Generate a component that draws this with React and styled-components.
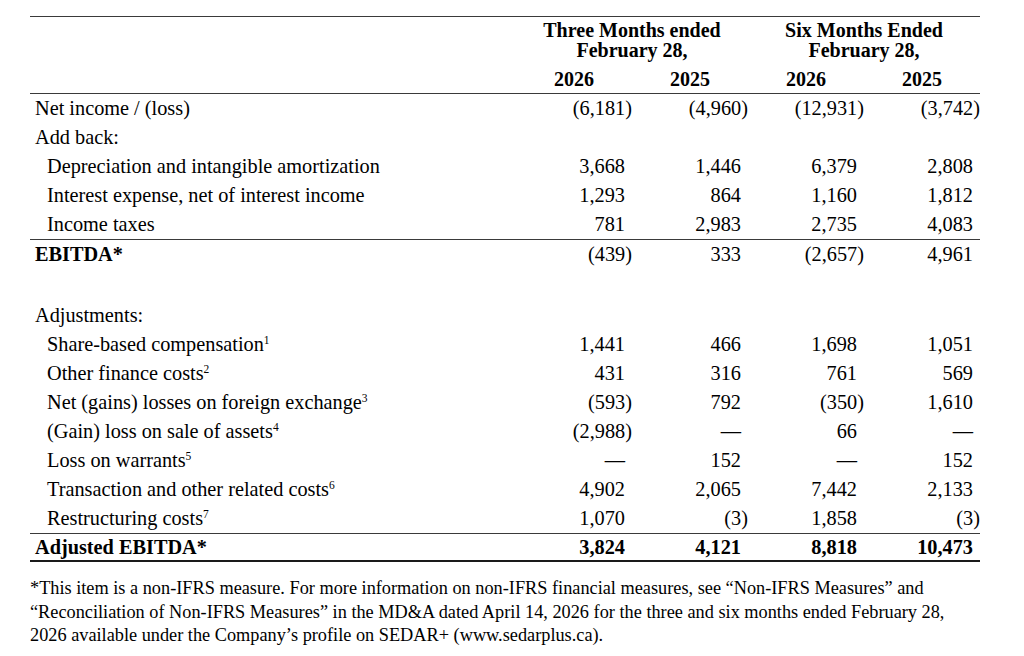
import React from 'react'
import styled, { createGlobalStyle } from 'styled-components'

const GlobalStyle = createGlobalStyle`
  html, body {
    margin: 0;
    padding: 0;
    background: #fff;
  }
  body {
    font-family: "Liberation Serif", "Times New Roman", serif;
    color: #000;
  }
`

const rows = [
  { label: 'Net income / (loss)', values: ['(6,181)', '(4,960)', '(12,931)', '(3,742)'] },
  { label: 'Add back:' },
  { label: 'Depreciation and intangible amortization', indent: true, values: ['3,668', '1,446', '6,379', '2,808'] },
  { label: 'Interest expense, net of interest income', indent: true, values: ['1,293', '864', '1,160', '1,812'] },
  { label: 'Income taxes', indent: true, values: ['781', '2,983', '2,735', '4,083'] },
  { label: 'EBITDA*', bold: true, rule: true, values: ['(439)', '333', '(2,657)', '4,961'] },
  { spacer: true },
  { label: 'Adjustments:' },
  { label: 'Share-based compensation', note: '1', indent: true, values: ['1,441', '466', '1,698', '1,051'] },
  { label: 'Other finance costs', note: '2', indent: true, values: ['431', '316', '761', '569'] },
  { label: 'Net (gains) losses on foreign exchange', note: '3', indent: true, values: ['(593)', '792', '(350)', '1,610'] },
  { label: '(Gain) loss on sale of assets', note: '4', indent: true, values: ['(2,988)', '—', '66', '—'] },
  { label: 'Loss on warrants', note: '5', indent: true, values: ['—', '152', '—', '152'] },
  { label: 'Transaction and other related costs', note: '6', indent: true, values: ['4,902', '2,065', '7,442', '2,133'] },
  { label: 'Restructuring costs', note: '7', indent: true, values: ['1,070', '(3)', '1,858', '(3)'] },
]

const App = () => {
  return (
    <Page>
      <GlobalStyle />
      <Table>
        <Header>
          <Blank />
          <GroupTitle>Three Months ended<br />February 28,</GroupTitle>
          <GroupTitle>Six Months Ended<br />February 28,</GroupTitle>
          <Blank />
          <Year>2026</Year>
          <Year>2025</Year>
          <Year>2026</Year>
          <Year>2025</Year>
        </Header>

        {rows.map((row, i) =>
          row.spacer ? (
            <Spacer key={i} />
          ) : (
            <Row key={i} $rule={row.rule}>
              <Label $indent={row.indent} $bold={row.bold}>
                {row.label}
                {row.note && <Sup>{row.note}</Sup>}
              </Label>
              {(row.values || ['', '', '', '']).map((v, j) => (
                <Num key={j} $paren={v.endsWith(')')}>{v}</Num>
              ))}
            </Row>
          )
        )}

        <TotalRow>
          <Label $bold>Adjusted EBITDA*</Label>
          <Num $bold>3,824</Num>
          <Num $bold>4,121</Num>
          <Num $bold>8,818</Num>
          <Num $bold>10,473</Num>
        </TotalRow>
      </Table>

      <Footnote>
        *This item is a non-IFRS measure. For more information on non-IFRS financial measures, see “Non-IFRS Measures” and<br />
        “Reconciliation of Non-IFRS Measures” in the MD&amp;A dated April 14, 2026 for the three and six months ended February 28,<br />
        2026 available under the Company’s profile on SEDAR+ (www.sedarplus.ca).
      </Footnote>
    </Page>
  )
}

const Page = styled.div`
  width: 1024px;
  height: 656px;
  box-sizing: border-box;
  padding: 16px 0 0 30px;
  overflow: hidden;
`

const Table = styled.div`
  width: 950px;
  font-size: 20.3px;
`

const columns = `486px repeat(4, 116px)`

const Header = styled.div`
  display: grid;
  grid-template-columns: ${columns};
  border-top: 1px solid #3a3a3a;
  border-bottom: 1px solid #3a3a3a;
  padding: 3px 0 4px;
  font-weight: bold;
  font-size: 20px;
  line-height: 20px;
`

const Blank = styled.div``

const GroupTitle = styled.div`
  grid-column: span 2;
  text-align: center;
  padding-bottom: 9px;
`

const Year = styled.div`
  text-align: center;
`

const Row = styled.div`
  display: grid;
  grid-template-columns: ${columns};
  height: 29px;
  align-items: center;
  line-height: 29px;
  border-top: ${({ $rule }) => ($rule ? '1px solid #3a3a3a' : 'none')};
`

const Spacer = styled.div`
  height: 32px;
`

const TotalRow = styled(Row)`
  height: 26px;
  line-height: 26px;
  border-top: 1px solid #3a3a3a;
  border-bottom: 2px solid #1a1a1a;
`

const Label = styled.div`
  padding-left: ${({ $indent }) => ($indent ? '17px' : '5px')};
  font-weight: ${({ $bold }) => ($bold ? 'bold' : 'normal')};
  white-space: nowrap;
`

const Sup = styled.span`
  font-size: 11.5px;
  line-height: 0;
  vertical-align: 7px;
`

const Num = styled.div`
  text-align: right;
  padding-right: ${({ $paren }) => ($paren ? '0' : '7px')};
  font-weight: ${({ $bold }) => ($bold ? 'bold' : 'normal')};
  white-space: nowrap;
`

const Footnote = styled.p`
  margin: 15px 0 0;
  font-size: 18.3px;
  line-height: 23.5px;
  white-space: nowrap;
`

export default App
